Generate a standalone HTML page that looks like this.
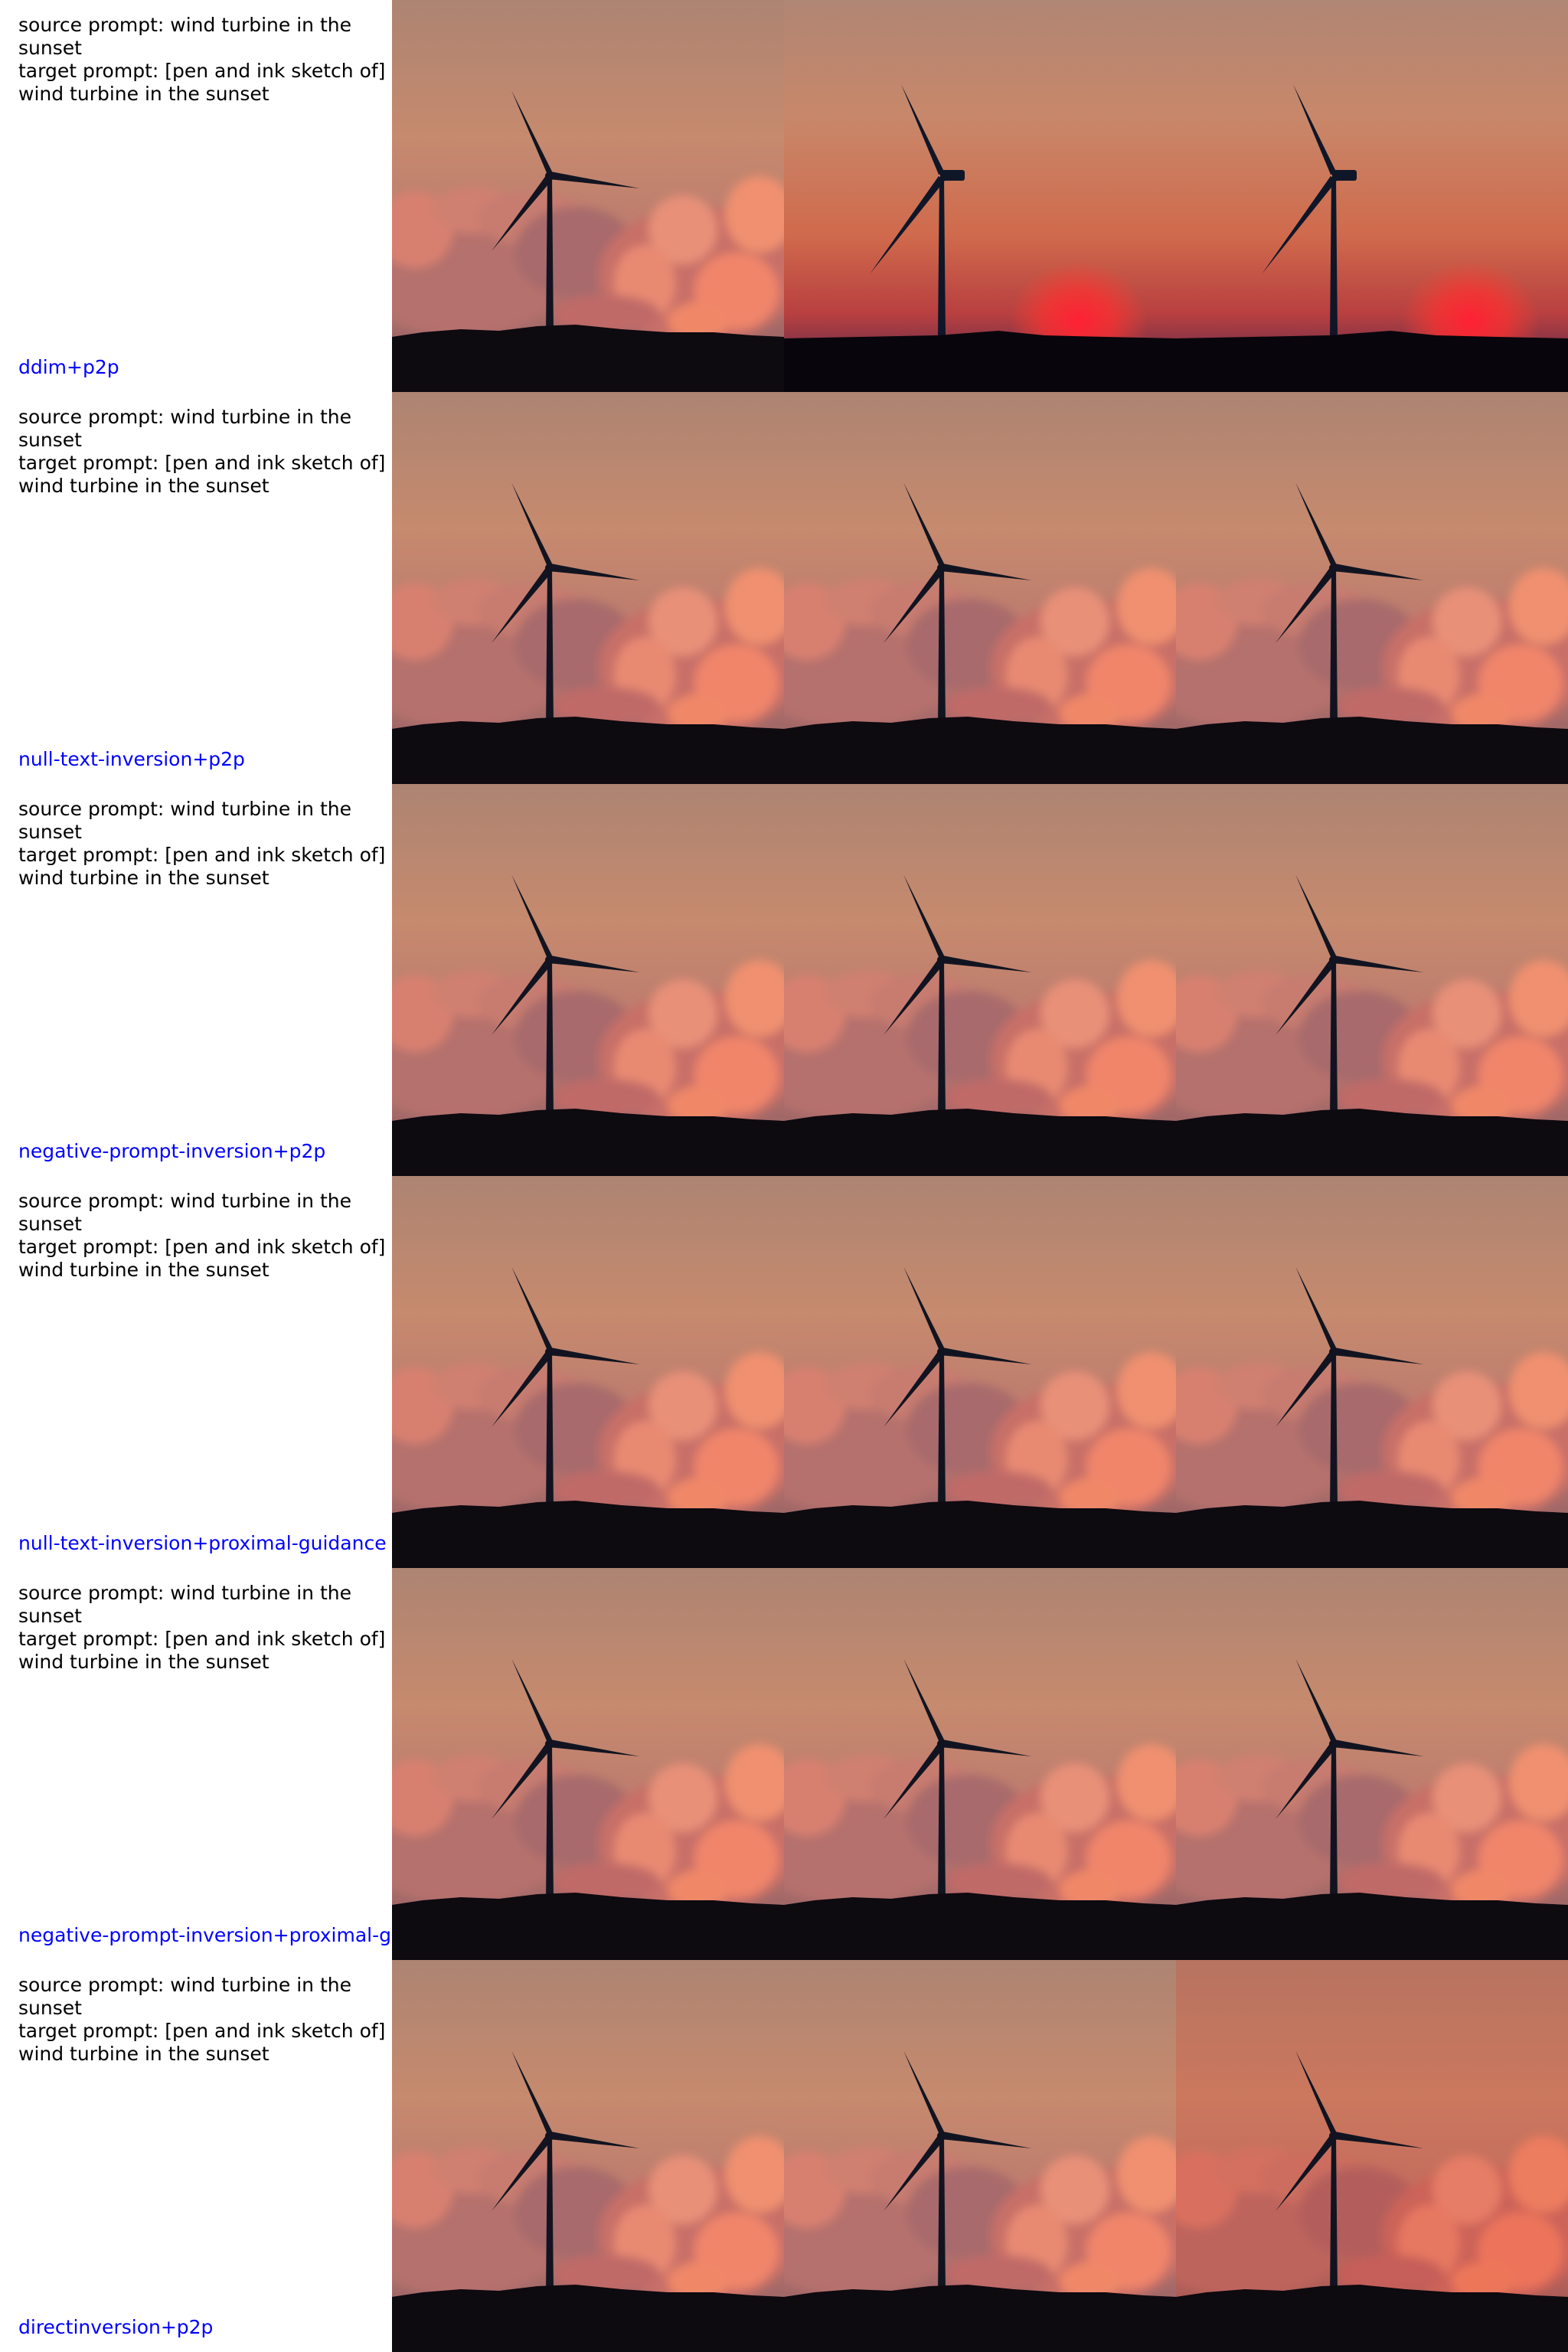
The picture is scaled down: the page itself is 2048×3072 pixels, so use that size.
<!DOCTYPE html>
<html><head><meta charset="utf-8"><style>
body{margin:0;width:2048px;height:3072px;background:#fff;position:relative;overflow:hidden;font-family:"DejaVu Sans","Liberation Sans",sans-serif;}
.row{position:absolute;left:0;width:2048px;height:512px;}
.txt{position:absolute;left:24px;top:18px;width:490px;font-size:25px;line-height:30px;color:#000;white-space:nowrap;}
.lab{position:absolute;left:24px;top:465px;font-size:25px;line-height:30px;color:#0000ff;white-space:nowrap;}
svg.p{position:absolute;top:0;width:512px;height:512px;}
</style></head><body>
<svg width="0" height="0" style="position:absolute">
<defs>
<linearGradient id="sky" x1="0" y1="0" x2="0" y2="1">
<stop offset="0" stop-color="#ad8472"/><stop offset="0.35" stop-color="#c68a6e"/><stop offset="0.7" stop-color="#b9766e"/><stop offset="1" stop-color="#8a5a60"/></linearGradient>
<linearGradient id="skyr" x1="0" y1="0" x2="0" y2="1">
<stop offset="0" stop-color="#b08674"/><stop offset="0.3" stop-color="#c8876a"/><stop offset="0.6" stop-color="#d06a4c"/><stop offset="0.8" stop-color="#b84040"/><stop offset="0.9" stop-color="#7a3048"/><stop offset="1" stop-color="#3a2040"/></linearGradient>
<radialGradient id="sun" cx="0.5" cy="0.5" r="0.5"><stop offset="0" stop-color="#ff2035"/><stop offset="0.5" stop-color="#ff3030" stop-opacity="0.7"/><stop offset="1" stop-color="#ff4030" stop-opacity="0"/></radialGradient>
<filter id="bl" x="-20%" y="-20%" width="140%" height="140%"><feGaussianBlur stdDeviation="6"/></filter>
<g id="clouds" filter="url(#bl)">
<ellipse cx="90" cy="350" rx="140" ry="90" fill="#b5716d"/>
<ellipse cx="30" cy="300" rx="50" ry="50" fill="#d88070"/>
<ellipse cx="110" cy="275" rx="60" ry="30" fill="#d08070"/>
<ellipse cx="180" cy="285" rx="70" ry="35" fill="#c87c70"/>
<ellipse cx="240" cy="330" rx="80" ry="60" fill="#a86a6c"/>
<ellipse cx="400" cy="360" rx="130" ry="90" fill="#c87068"/>
<ellipse cx="380" cy="300" rx="45" ry="45" fill="#e89078"/>
<ellipse cx="480" cy="280" rx="45" ry="50" fill="#f09070"/>
<ellipse cx="330" cy="370" rx="40" ry="50" fill="#e88a72"/>
<ellipse cx="450" cy="380" rx="55" ry="50" fill="#f0856a"/>
<ellipse cx="400" cy="420" rx="40" ry="25" fill="#f08868"/>
<ellipse cx="280" cy="410" rx="70" ry="25" fill="#c06a68"/>
</g>
<g id="ground"><path d="M0 440 L40 434 L90 430 L140 432 L190 426 L240 424 L300 430 L360 434 L420 434 L470 438 L512 440 L512 512 L0 512Z" fill="#0d0a10"/></g>
<g id="turb" fill="#111420">
<polygon points="203,232 209,232 211,436 201,436"/>
<polygon points="203,228 156,118 211,228"/>
<polygon points="205,234 323,246 207,224"/>
<polygon points="202,228 130,328 210,234"/>
<circle cx="206" cy="230" r="6"/>
</g>
<g id="orig"><rect width="512" height="512" fill="url(#sky)"/><use href="#clouds"/><use href="#turb"/><use href="#ground"/></g>
<g id="red"><rect width="512" height="512" fill="url(#skyr)"/><ellipse cx="385" cy="420" rx="90" ry="80" fill="url(#sun)"/>
<g fill="#0f1628"><polygon points="203,232 209,232 211,440 201,440"/><polygon points="202,228 153,110 211,228"/><polygon points="202,230 112,358 210,236"/><rect x="204" y="222" width="32" height="14" rx="3"/></g>
<path d="M0 442 L100 440 L200 438 L280 432 L340 438 L420 440 L512 442 L512 512 L0 512Z" fill="#08060c"/></g>
</defs></svg>

<div class="row" style="top:0"><div class="txt">source prompt: wind turbine in the<br>sunset<br>target prompt: [pen and ink sketch of]<br>wind turbine in the sunset</div><div class="lab">ddim+p2p</div>
<svg class="p" style="left:512px"><use href="#orig"/></svg><svg class="p" style="left:1024px"><use href="#red"/></svg><svg class="p" style="left:1536px"><use href="#red"/></svg></div>

<div class="row" style="top:512px"><div class="txt">source prompt: wind turbine in the<br>sunset<br>target prompt: [pen and ink sketch of]<br>wind turbine in the sunset</div><div class="lab">null-text-inversion+p2p</div>
<svg class="p" style="left:512px"><use href="#orig"/></svg><svg class="p" style="left:1024px"><use href="#orig"/></svg><svg class="p" style="left:1536px"><use href="#orig"/></svg></div>

<div class="row" style="top:1024px"><div class="txt">source prompt: wind turbine in the<br>sunset<br>target prompt: [pen and ink sketch of]<br>wind turbine in the sunset</div><div class="lab">negative-prompt-inversion+p2p</div>
<svg class="p" style="left:512px"><use href="#orig"/></svg><svg class="p" style="left:1024px"><use href="#orig"/></svg><svg class="p" style="left:1536px"><use href="#orig"/></svg></div>

<div class="row" style="top:1536px"><div class="txt">source prompt: wind turbine in the<br>sunset<br>target prompt: [pen and ink sketch of]<br>wind turbine in the sunset</div><div class="lab">null-text-inversion+proximal-guidance</div>
<svg class="p" style="left:512px"><use href="#orig"/></svg><svg class="p" style="left:1024px"><use href="#orig"/></svg><svg class="p" style="left:1536px"><use href="#orig"/></svg></div>

<div class="row" style="top:2048px"><div class="txt">source prompt: wind turbine in the<br>sunset<br>target prompt: [pen and ink sketch of]<br>wind turbine in the sunset</div><div class="lab">negative-prompt-inversion+proximal-guidance</div>
<svg class="p" style="left:512px"><use href="#orig"/></svg><svg class="p" style="left:1024px"><use href="#orig"/></svg><svg class="p" style="left:1536px"><use href="#orig"/></svg></div>

<div class="row" style="top:2560px"><div class="txt">source prompt: wind turbine in the<br>sunset<br>target prompt: [pen and ink sketch of]<br>wind turbine in the sunset</div><div class="lab">directinversion+p2p</div>
<svg class="p" style="left:512px"><use href="#orig"/></svg><svg class="p" style="left:1024px"><use href="#orig"/></svg><svg class="p" style="left:1536px"><rect width="512" height="512" fill="url(#sky)"/><use href="#clouds"/><rect width="512" height="512" fill="#e03020" opacity="0.2"/><use href="#turb"/><use href="#ground"/></svg></div>
</body></html>
